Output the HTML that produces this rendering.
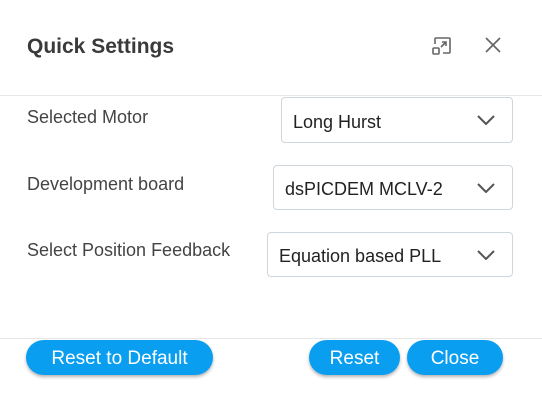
<!DOCTYPE html>
<html><head><style>
body{margin:0;width:542px;height:400px;background:#fff;font-family:"Liberation Sans",sans-serif;position:relative;overflow:hidden;color:#333}
.abs{position:absolute}
.title{left:27px;top:35px;font-size:21px;font-weight:bold;color:#3a3a3a}
.lbl{left:27px;font-size:18px;color:#444}
.sel{border:1px solid #cfd6dc;border-radius:4px;box-sizing:border-box;font-size:18px;color:#222;padding-left:11px;padding-top:4px;display:flex;align-items:center;right:29px}
.sel svg{position:absolute;right:17px;top:50%;margin-top:-5px}
.btn{background:#0a9ef0;color:#fff;border-radius:18px;font-size:19px;text-align:center;line-height:37px;height:35px;top:340px;box-shadow:0 2px 3px rgba(0,0,0,.3)}
</style></head><body>
<div class="abs title">Quick Settings</div>
<svg class="abs" style="left:431px;top:35px" width="22" height="22" viewBox="0 0 22 22" fill="none" stroke="#666" stroke-width="1.6"><path d="M4 9V4a1 1 0 0 1 1-1h13a1 1 0 0 1 1 1v13a1 1 0 0 1-1 1h-6"/><rect x="2" y="13" width="6" height="6" rx="1"/><path d="M10 12l5-5M11 7h4v4"/></svg>
<svg class="abs" style="left:484px;top:36px" width="18" height="18" viewBox="0 0 18 18" stroke="#666" stroke-width="1.7"><path d="M2 2l14 14M16 2L2 16"/></svg>
<div class="abs" style="left:0;right:0;top:95px;height:1px;background:#e6e6e6"></div>
<div class="abs lbl" style="top:107px">Selected Motor</div>
<div class="abs sel" style="left:281px;top:97px;height:46px">Long Hurst<svg width="18" height="10" viewBox="0 0 18 10" fill="none" stroke="#555" stroke-width="2"><path d="M1 1l8 8 8-8"/></svg></div>
<div class="abs lbl" style="top:174px">Development board</div>
<div class="abs sel" style="left:273px;top:165px;height:45px">dsPICDEM MCLV-2<svg width="18" height="10" viewBox="0 0 18 10" fill="none" stroke="#555" stroke-width="2"><path d="M1 1l8 8 8-8"/></svg></div>
<div class="abs lbl" style="top:240px">Select Position Feedback</div>
<div class="abs sel" style="left:267px;top:232px;height:45px">Equation based PLL<svg width="18" height="10" viewBox="0 0 18 10" fill="none" stroke="#555" stroke-width="2"><path d="M1 1l8 8 8-8"/></svg></div>
<div class="abs" style="left:0;right:0;top:338px;height:1px;background:#e6e6e6"></div>
<div class="abs btn" style="left:26px;width:187px">Reset to Default</div>
<div class="abs btn" style="left:309px;width:91px">Reset</div>
<div class="abs btn" style="left:407px;width:96px">Close</div>
</body></html>
